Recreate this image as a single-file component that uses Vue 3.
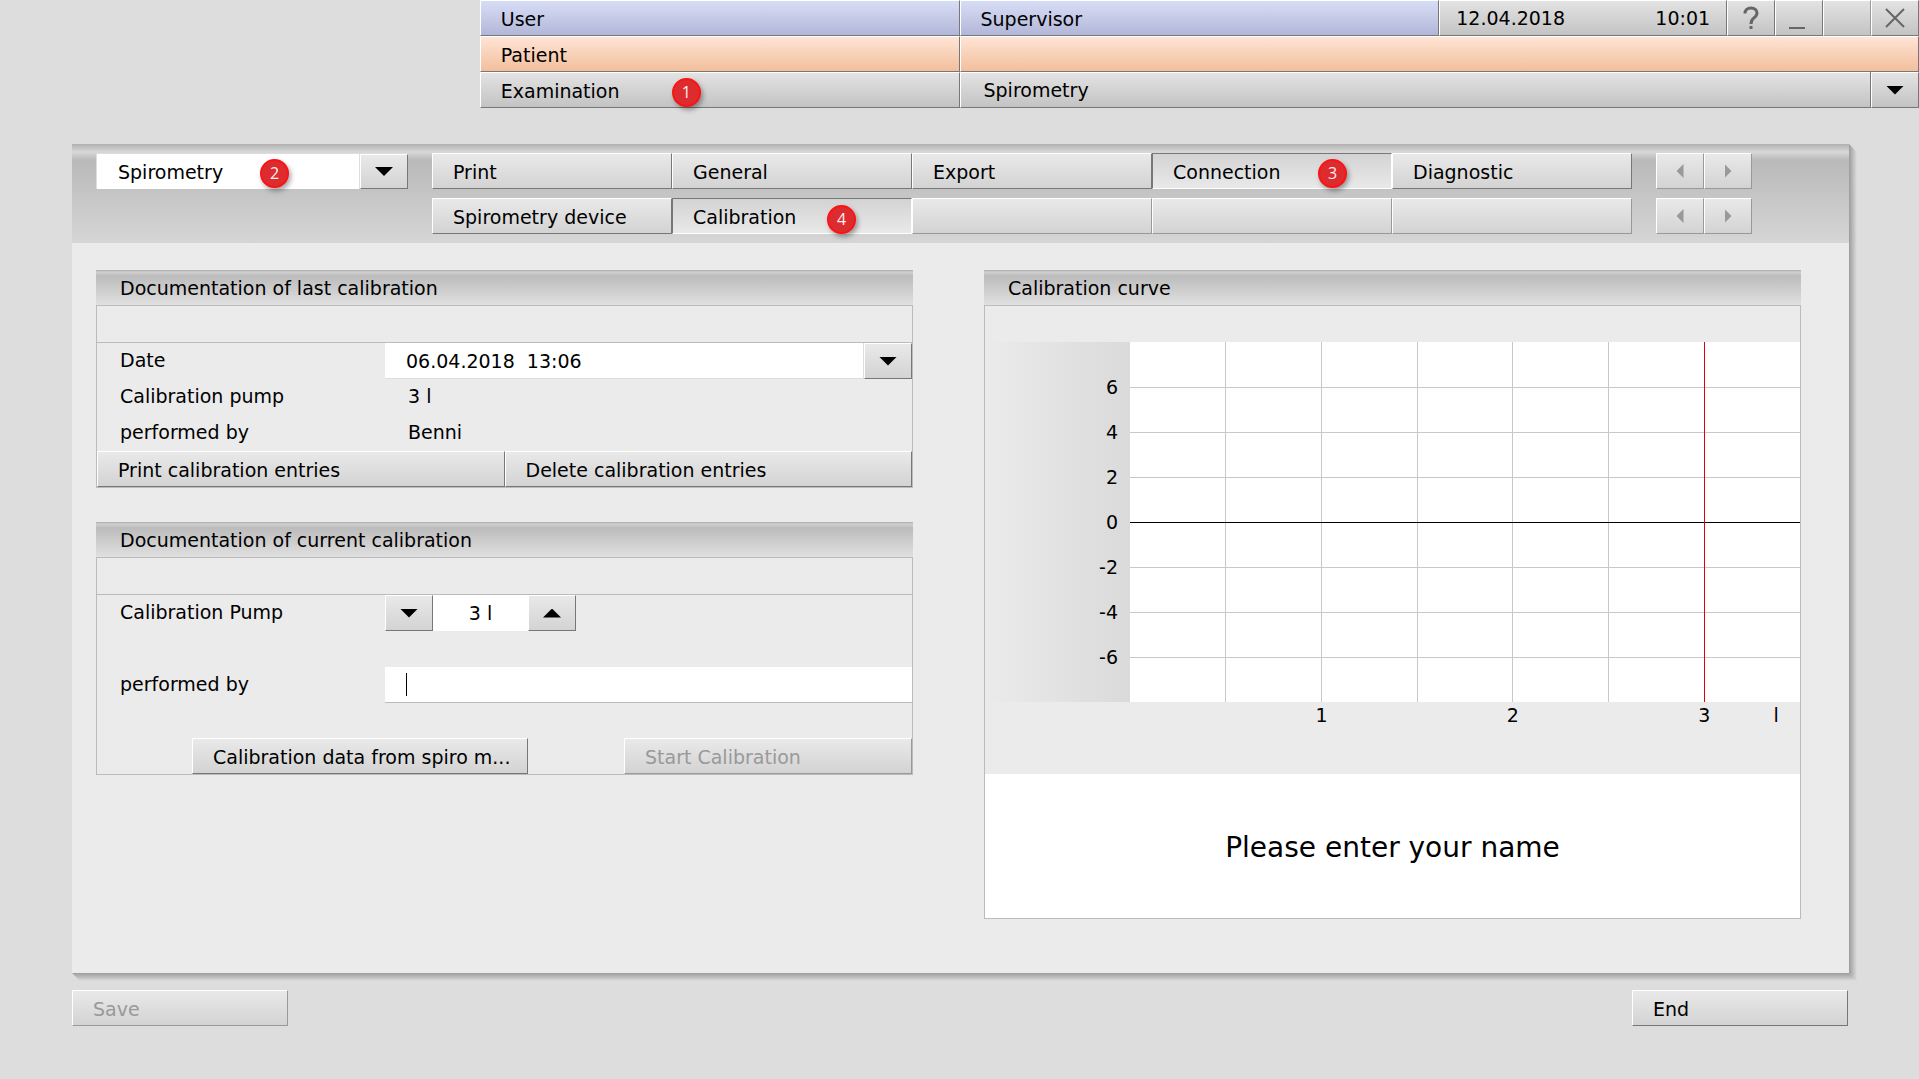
<template>
  <div class="screen">
    <header class="topbar">
      <div class="cell blue">User</div>
      <div class="cell blue">Supervisor</div>
      <div class="cell clock">
        <span>12.04.2018</span>
        <span>10:01</span>
      </div>
      <button class="cell tool" type="button" aria-label="Help">
        <svg class="bold" width="16" height="24" viewBox="0 0 16 24">
          <path d="M2 7.500C2 4 4.500 2 8 2s6 2 6 5c0 2.500-1.500 3.700-3.300 5.100C8.900 13.500 8 14.500 8 18" />
          <path d="M8 20v3" />
        </svg>
      </button>
      <button class="cell tool" type="button" aria-label="Minimize">
        <svg width="20" height="24" viewBox="0 0 20 24">
          <path d="M0 22h16" />
        </svg>
      </button>
      <button class="cell tool soft" type="button" aria-label="Restore" disabled></button>
      <button class="cell tool" type="button" aria-label="Close">
        <svg width="20" height="20" viewBox="0 0 20 20">
          <path d="M1 1l18 18M19 1L1 19" />
        </svg>
      </button>

      <div class="cell peach">Patient</div>
      <div class="cell peach wide"></div>

      <label class="cell" for="examination">
        Examination
        <span class="badge badge-exam">1</span>
      </label>
      <div class="picker exam-picker wide">
        <select id="examination" v-model="examination">
          <option>Spirometry</option>
        </select>
        <span class="picker-arrow"><i class="down"></i></span>
      </div>
    </header>

    <main class="window">
      <nav class="band">
        <div class="picker module-picker">
          <select v-model="module" aria-label="Module">
            <option>Spirometry</option>
          </select>
          <span class="picker-arrow"><i class="down"></i></span>
          <span class="badge badge-module">2</span>
        </div>
        <div class="tabs">
          <button
            v-for="tab in mainTabs"
            :key="tab.name"
            type="button"
            class="btn"
            :class="{ pressed: tab.name === mainTab }"
            @click="mainTab = tab.name"
          >
            {{ tab.name }}
            <span v-if="tab.step" class="badge badge-main">{{ tab.step }}</span>
          </button>
          <button
            v-for="(tab, i) in subTabs"
            :key="i"
            type="button"
            class="btn"
            :class="{ pressed: tab.name && tab.name === subTab }"
            :disabled="!tab.name"
            @click="subTab = tab.name"
          >
            {{ tab.name }}
            <span v-if="tab.step" class="badge badge-sub">{{ tab.step }}</span>
          </button>
        </div>
        <div class="pager">
          <button class="btn" type="button" aria-label="Previous tabs" disabled><i class="left"></i></button>
          <button class="btn" type="button" aria-label="Next tabs" disabled><i class="right"></i></button>
          <button class="btn" type="button" aria-label="Previous pages" disabled><i class="left"></i></button>
          <button class="btn" type="button" aria-label="Next pages" disabled><i class="right"></i></button>
        </div>
      </nav>

      <div class="content">
        <div class="column">
          <section class="group">
            <h2>Documentation of last calibration</h2>
            <div class="strip"></div>
            <div class="row">
              <label for="date">Date</label>
              <div class="picker date-picker">
                <select id="date" v-model="date">
                  <option value="a">06.04.2018&nbsp; 13:06</option>
                </select>
                <span class="picker-arrow"><i class="down"></i></span>
              </div>
            </div>
            <div class="row">
              <span>Calibration pump</span>
              <span class="value">3 l</span>
            </div>
            <div class="row">
              <span>performed by</span>
              <span class="value">Benni</span>
            </div>
            <div class="pair">
              <button class="btn" type="button">Print calibration entries</button>
              <button class="btn" type="button">Delete calibration entries</button>
            </div>
          </section>

          <section class="group">
            <h2>Documentation of current calibration</h2>
            <div class="strip"></div>
            <div class="row">
              <label for="pump">Calibration Pump</label>
              <div class="stepper">
                <button class="btn" type="button" aria-label="Less" @click="pump > 1 && pump--"><i class="down"></i></button>
                <input id="pump" type="text" :value="pump + ' l'" readonly />
                <button class="btn" type="button" aria-label="More" @click="pump++"><i class="up"></i></button>
              </div>
            </div>
            <div class="row name-row">
              <label for="name">performed by</label>
              <div class="name-field">
                <input id="name" v-model="name" type="text" />
                <span v-if="!name" class="caret"></span>
              </div>
            </div>
            <div class="actions">
              <button class="btn" type="button">Calibration data from spiro m...</button>
              <button class="btn" type="button" disabled>Start Calibration</button>
            </div>
          </section>
        </div>

        <section class="group curve">
          <h2>Calibration curve</h2>
          <div class="chart">
            <div class="y-axis">
              <span v-for="n in yTicks" :key="n">{{ n }}</span>
            </div>
            <svg class="plot" width="100%" height="360" shape-rendering="crispEdges">
              <line
                v-for="n in 6"
                :key="'v' + n"
                class="grid"
                :x1="(n * 100) / 7 + '%'"
                :x2="(n * 100) / 7 + '%'"
                y1="0"
                y2="100%"
              />
              <line
                v-for="(n, i) in yTicks"
                :key="'h' + n"
                :class="n === 0 ? 'zero' : 'grid'"
                x1="0"
                x2="100%"
                :y1="45 * (i + 1)"
                :y2="45 * (i + 1)"
              />
              <line class="limit" x1="85.700%" x2="85.700%" y1="0" y2="100%" />
            </svg>
            <div class="x-axis">
              <span class="x1">1</span>
              <span class="x2">2</span>
              <span class="x3">3</span>
              <span class="unit">l</span>
            </div>
          </div>
          <p class="message">Please enter your name</p>
        </section>
      </div>
    </main>

    <footer class="footer">
      <button class="btn" type="button" disabled>Save</button>
      <button class="btn" type="button">End</button>
    </footer>
  </div>
</template>

<script setup>
import { ref } from 'vue';

const examination = ref('Spirometry');
const module = ref('Spirometry');
const date = ref('a');
const pump = ref(3);
const name = ref('');

const mainTab = ref('Connection');
const subTab = ref('Calibration');

const mainTabs = [
  { name: 'Print' },
  { name: 'General' },
  { name: 'Export' },
  { name: 'Connection', step: 3 },
  { name: 'Diagnostic' },
];

const subTabs = [
  { name: 'Spirometry device' },
  { name: 'Calibration', step: 4 },
  { name: '' },
  { name: '' },
  { name: '' },
];

const yTicks = [6, 4, 2, 0, -2, -4, -6];
</script>

<style>
body {
  margin: 0;
  background: #ddd;
}
</style>

<style scoped>
.screen,
.screen * {
  box-sizing: border-box;
}

.screen {
  min-height: 100vh;
  background: #ddd;
  color: #000;
  font-family: 'DejaVu Sans', Verdana, sans-serif;
  font-size: 19px;
  line-height: 24px;
}

button,
input,
select {
  margin: 0;
  border-radius: 0;
  color: inherit;
  font: inherit;
}

/* Header */
.topbar {
  display: grid;
  grid-template-columns: 10fr 10fr 6fr 1fr 1fr 1fr 1fr;
  grid-auto-rows: 36px;
  margin-left: 25%;
}

.cell {
  position: relative;
  display: flex;
  align-items: center;
  min-width: 0;
  padding: 2px 20px 0;
  border: 1px solid;
  border-color: #fff #777 #777 #fff;
  background: linear-gradient(#e3e3e3, #c3c3c3);
}

.cell.blue {
  background: linear-gradient(#d8ddf6, #b2b7d9);
}

.cell.peach {
  background: linear-gradient(#ffe4d6, #f2bf9c);
}

.clock {
  justify-content: space-between;
  padding: 0 16px;
}

.tool {
  justify-content: center;
  padding: 0;
}

.tool.soft {
  border-right-color: #999;
  border-bottom-color: #999;
}

.tool svg {
  fill: none;
  stroke: #666;
  stroke-width: 2;
}

.tool svg.bold {
  stroke-width: 3;
}

.wide {
  grid-column: 2 / -1;
}

/* Drop-downs */
.picker {
  position: relative;
  display: grid;
  grid-template-columns: 1fr 48px;
  height: 36px;
}

.picker select {
  grid-area: 1 / 1 / 2 / 3;
  width: 100%;
  height: 100%;
  padding: 0 60px 0 21px;
  border: 0;
  background: #fff;
  appearance: none;
  outline: none;
}

.picker-arrow {
  grid-area: 1 / 2;
  display: flex;
  align-items: center;
  justify-content: center;
  border: 1px solid;
  border-color: #fff #777 #777 #fff;
  background: linear-gradient(#e9e9e9, #d3d3d3);
  box-shadow: -1px 0 #ddd;
  pointer-events: none;
}

.exam-picker select {
  padding-left: 23px;
  border: 1px solid;
  border-color: #fff #777 #777 #fff;
  background: linear-gradient(#e3e3e3, #c3c3c3);
}

.exam-picker .picker-arrow {
  background: linear-gradient(#e3e3e3, #c3c3c3);
  box-shadow: -1px 0 #777;
}

/* Arrow glyphs */
.down,
.up,
.left,
.right {
  width: 18px;
  height: 9px;
  background: #000;
}

.down {
  clip-path: polygon(0 0, 100% 0, 50% 100%);
}

.up {
  clip-path: polygon(50% 0, 100% 100%, 0 100%);
}

.left,
.right {
  width: 7px;
  height: 14px;
  background: #999;
}

.left {
  clip-path: polygon(100% 0, 100% 100%, 0 50%);
}

.right {
  clip-path: polygon(0 0, 100% 50%, 0 100%);
}

/* Buttons */
.btn {
  position: relative;
  display: flex;
  align-items: center;
  min-width: 0;
  height: 36px;
  padding: 2px 20px 0;
  border: 1px solid;
  border-color: #fff #777 #777 #fff;
  background: linear-gradient(#e9e9e9, #d3d3d3);
  text-align: left;
  white-space: nowrap;
}

.btn:disabled {
  border-right-color: #999;
  border-bottom-color: #999;
  color: #999;
}

.btn.pressed {
  border-color: #777 #fff #fff #777;
  background: linear-gradient(#d3d3d3, #e9e9e9);
}

/* Numbered markers */
.badge {
  position: absolute;
  top: 5px;
  width: 29px;
  height: 29px;
  border: 2px solid #fb1414;
  border-radius: 50%;
  background: #dc2c2f;
  box-shadow: 2px 3px 5px rgba(0, 0, 0, 0.35);
  color: #fee;
  font-family: 'Open Sans', sans-serif;
  font-size: 16px;
  line-height: 24px;
  text-align: center;
}

.badge-exam {
  left: 191px;
}

.badge-module {
  left: 163px;
}

.badge-main {
  left: 165px;
}

.badge-sub {
  top: 6px;
  left: 154px;
}

/* Main window */
.window {
  position: relative;
  margin: 36px 70px 0 72px;
  background: #ebebeb;
}

.window::before,
.window::after {
  content: '';
  position: absolute;
}

.window::before {
  top: 100%;
  right: -8px;
  left: 0;
  height: 8px;
  background: linear-gradient(#9c9c9c, #ddd);
  clip-path: polygon(0 0, calc(100% - 8px) 0, 100% 100%, 8px 100%);
}

.window::after {
  top: 0;
  bottom: -8px;
  left: 100%;
  width: 8px;
  background: linear-gradient(to right, #9c9c9c, #ddd);
  clip-path: polygon(0 0, 100% 8px, 100% 100%, 0 calc(100% - 8px));
}

.band {
  display: grid;
  grid-template-columns: 13fr 50fr 4fr;
  column-gap: 24px;
  padding: 9px 97px 9px 24px;
  background: linear-gradient(#b0b0b0, #d8d8d8 8px, #b9b9b9 16px, #d6d6d6);
}

.module-picker {
  border: 1px solid #ddd;
  border-width: 1px 0 0 1px;
}

.tabs {
  display: grid;
  grid-template-columns: repeat(5, 1fr);
  row-gap: 9px;
}

.pager {
  display: grid;
  grid-template-columns: 1fr 1fr;
  row-gap: 9px;
}

.pager .btn {
  justify-content: center;
  padding: 0;
}

.content {
  display: grid;
  grid-template-columns: 1fr 1fr;
  column-gap: 71px;
  padding: 27px 48px 54px 24px;
}

/* Group boxes */
.column {
  display: flex;
  flex-direction: column;
  gap: 34px;
}

.group {
  border: 1px solid #bbb;
  border-top: 0;
}

.group h2 {
  height: 36px;
  margin: 0 -1px;
  padding: 0 24px;
  border-bottom: 1px solid #bbb;
  background: linear-gradient(#aaa, #d0d0d0 2px, #bcbcbc 6px, #e0e0e0);
  font-size: 19px;
  font-weight: normal;
  line-height: 36px;
}

.strip {
  height: 37px;
  border-bottom: 1px solid #bbb;
}

.row {
  display: grid;
  grid-template-columns: 288px 1fr;
  align-items: center;
  height: 36px;
}

.row > :first-child,
.value {
  padding: 0 0 2px 23px;
}

.date-picker select {
  border-bottom: 1px solid #ddd;
}

.pair {
  display: grid;
  grid-template-columns: 1fr 1fr;
}

.stepper {
  display: grid;
  grid-template-columns: 48px 95px 48px;
}

.stepper .btn {
  justify-content: center;
  padding: 0;
}

.row input {
  width: 100%;
  height: 36px;
  padding: 0 20px;
  border: 0;
  border-bottom: 1px solid #bbb;
  background: #fff;
  outline: none;
}

.row .stepper input {
  border: 0;
  text-align: center;
}

.name-row {
  margin: 36px 0 35px;
}

.name-field {
  position: relative;
}

.caret {
  position: absolute;
  top: 6px;
  left: 21px;
  width: 1px;
  height: 23px;
  background: #000;
}

.actions {
  display: flex;
  justify-content: space-between;
  padding-left: 95px;
}

.actions .btn {
  width: 336px;
}

.actions .btn:last-child {
  width: 288px;
}

/* Curve */
.curve {
  display: flex;
  flex-direction: column;
}

.chart {
  display: grid;
  grid-template-columns: 145px 1fr;
  flex: 1;
  padding-top: 36px;
}

.y-axis {
  display: grid;
  grid-auto-rows: 45px;
  align-items: center;
  height: 360px;
  padding: 22px 12px 0 0;
  background: linear-gradient(to right, #ebebeb, #dadada);
  text-align: right;
}

.plot {
  display: block;
  background: #fff;
}

.grid {
  stroke: #c8c8c8;
}

.zero {
  stroke: #000;
}

.limit {
  stroke: #e00010;
}

.x-axis {
  display: grid;
  grid-column: 2;
  grid-template-columns: repeat(14, 1fr);
  height: 72px;
  padding-top: 1px;
  text-align: center;
}

.x1 {
  grid-column: 4 / span 2;
}

.x2 {
  grid-column: 8 / span 2;
}

.x3 {
  grid-column: 12 / span 2;
}

.unit {
  grid-column: 14;
}

.message {
  display: flex;
  align-items: center;
  justify-content: center;
  height: 144px;
  margin: 0;
  padding-top: 4px;
  background: #fff;
  font-size: 28px;
  line-height: 36px;
}

/* Footer */
.footer {
  display: flex;
  justify-content: space-between;
  padding: 17px 71px 53px 72px;
}

.footer .btn {
  width: 216px;
}
</style>
